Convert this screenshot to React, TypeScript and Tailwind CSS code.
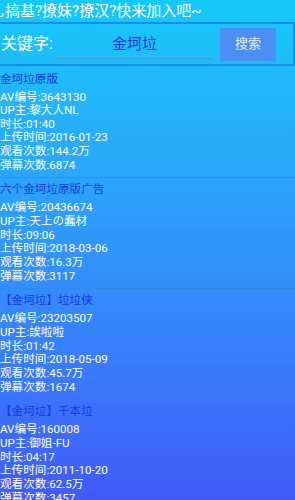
import React from "react";

// search result list for 金坷垃
const videos = [
  { title: "金坷垃原版", av: "3643130", up: "黎大人NL", len: "01:40", date: "2016-01-23", views: "144.2万", danmaku: "6874" },
  { title: "六个金坷垃原版广告", av: "20436674", up: "天上の蠢材", len: "09:06", date: "2018-03-06", views: "16.3万", danmaku: "3117" },
  { title: "【金坷垃】垃垃侠", av: "23203507", up: "誒啦啦", len: "01:42", date: "2018-05-09", views: "45.7万", danmaku: "1674" },
  { title: "【金坷垃】千本垃", av: "160008", up: "御姐-FU", len: "04:17", date: "2011-10-20", views: "62.5万", danmaku: "3457" },
];

export default function App() {
  return (
    <div
      className="h-[500px] w-full overflow-hidden bg-linear-to-b from-[#14c9f9] to-[#405af8] flex flex-col"
      style={{ fontFamily: '"Roboto", "Noto Sans CJK SC", sans-serif' }}
    >
      <div className="h-[22px] shrink-0 overflow-hidden whitespace-nowrap text-white text-[15px] leading-[22px]">
        <span className="-ml-[10px]">乚搞基?撩妹?撩汉?快来加入吧~</span>
      </div>
      <div className="h-[44px] border-y-2 border-r-2 border-[#1b8cec] flex items-center shrink-0">
        <span className="text-white text-[16px] pl-[1px] w-[56px]">关键字:</span>
        <div className="w-[157px] h-[30px] border-b border-[#3a9fce] flex items-center justify-center text-[15px] text-[#1b33e0] pt-[2px]">
          金坷垃
        </div>
        <button className="ml-[7px] w-[56px] h-[33px] rounded-[2px] bg-[#4b8ff3] text-[#e4ecf6] text-[13px]">
          搜索
        </button>
      </div>
      <div className="flex-1 overflow-hidden pt-[1.5px]">
        {videos.map((v) => (
          <div key={v.av} className="pt-[3px] pb-[5px] border-b border-[#1f86d8]/40">
            <div className="text-[#1a36dc] text-[11.6px] leading-[17px]">{v.title}</div>
            <div className="mt-[3px] text-white text-[11.6px] leading-[13.66px]">
              <div>AV编号:{v.av}</div>
              <div>UP主:{v.up}</div>
              <div>时长:{v.len}</div>
              <div>上传时间:{v.date}</div>
              <div>观看次数:{v.views}</div>
              <div>弹幕次数:{v.danmaku}</div>
            </div>
          </div>
        ))}
      </div>
    </div>
  );
}
